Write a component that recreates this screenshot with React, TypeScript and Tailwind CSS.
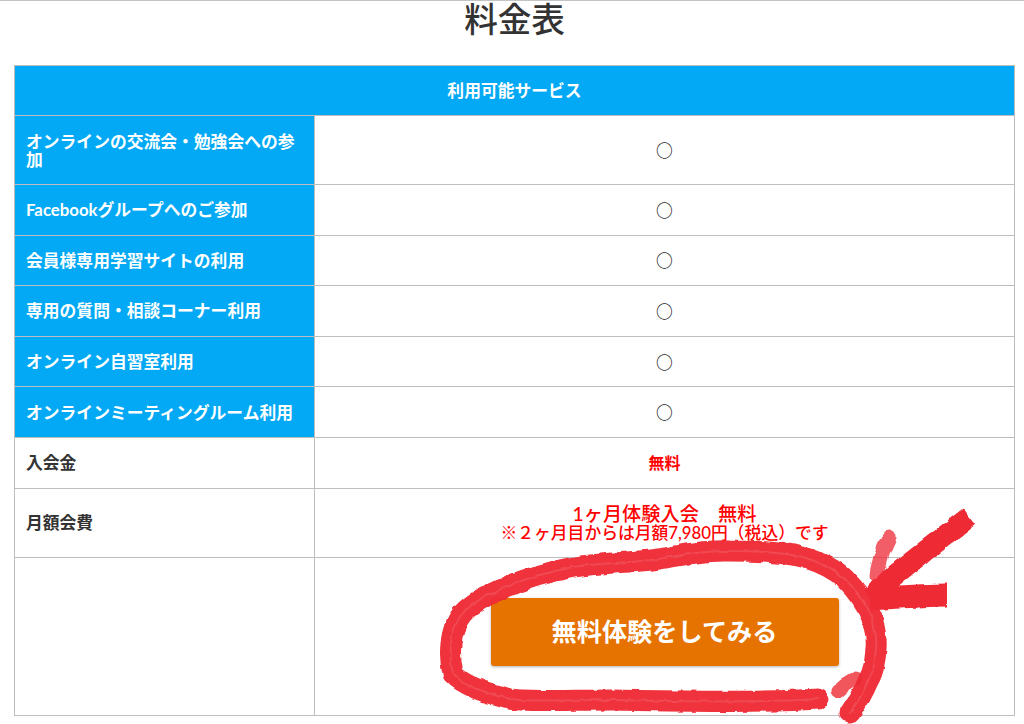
const services = [
  'Facebookグループへのご参加',
  '会員様専用学習サイトの利用',
  '専用の質問・相談コーナー利用',
  'オンライン自習室利用',
  'オンラインミーティングルーム利用',
];

const ellipsePath =
  'M818 698 C760 702 680 700 613 699 C570 699 535 701 509 698 C488 692 465 686 453 673 C450 660 450 652 451 643 C452 630 455 622 462 613 C472 602 484 596 497 590 C522 578 548 571 574 566 C605 561 632 562 659 558 C685 553 708 549 729 550 C760 550 785 551 806 557 C822 562 835 568 845 578 C857 590 866 603 872 617 C875 628 877 638 876 647 C875 660 874 670 868 680 C863 692 857 702 850 712';

function Ink() {
  return (
    <svg className="absolute left-0 top-0 pointer-events-none" width="1024" height="724" viewBox="0 0 1024 724" fill="none">
      <defs>
        <filter id="brush" filterUnits="userSpaceOnUse" x="0" y="0" width="1024" height="724">
          <feTurbulence type="fractalNoise" baseFrequency="0.1" numOctaves="2" seed="4" />
          <feDisplacementMap in="SourceGraphic" scale="4" xChannelSelector="R" yChannelSelector="G" />
        </filter>
      </defs>
      <g stroke="#ee2a35" strokeLinecap="round" strokeLinejoin="round" filter="url(#brush)">
        <path d={ellipsePath} strokeWidth="21" strokeOpacity="0.97" />
        <path d={ellipsePath} strokeWidth="2" stroke="#f25a62" strokeOpacity="0.6" />
        <path d="M969 516 C945 535 925 550 905 566 C892 576 882 585 872 596" strokeWidth="21" strokeLinecap="butt" />
        <path d="M870 598 C900 596 925 594 947 594" strokeWidth="23" strokeLinecap="butt" />
        <path d="M889 536 C883 548 879 560 877 574" strokeWidth="15" strokeOpacity="0.75" />
        <path d="M856 677 C849 680 843 685 838 690" strokeWidth="13" strokeOpacity="0.8" />
      </g>
    </svg>
  );
}

function Mark() {
  return (
    <td className="border border-[#bdbdbd] text-center font-['Noto_Sans_CJK_JP'] text-[16.8px] font-medium text-[#222222]">○</td>
  );
}

export default function App() {
  return (
    <div
      className="relative h-[724px] w-[1024px] overflow-hidden border-t border-[#c4c4c4] bg-white text-[#333333]"
      style={{ fontFamily: 'Lato, "Noto Sans CJK JP", sans-serif' }}
    >
      <h2 className="-mt-[1px] h-[65px] pl-[5px] text-center text-[33.6px] leading-[38px] font-medium">料金表</h2>
      <div className="px-[14px]">
        <table className="w-[1001px] table-fixed border-collapse text-[16.8px] leading-[18px] font-bold">
          <colgroup>
            <col className="w-[300px]" />
            <col />
          </colgroup>
          <thead>
            <tr className="h-[50px]">
              <th colSpan={2} className="border border-[#bdbdbd] bg-[#03a9f4] text-center font-bold text-white">
                利用可能サービス
              </th>
            </tr>
          </thead>
          <tbody>
            <tr className="h-[69px]">
              <th className="border border-[#bdbdbd] bg-[#03a9f4] px-[11px] pt-[1px] text-left font-bold text-white">
                オンラインの交流会・勉強会への参加
              </th>
              <Mark />
            </tr>
            {services.map((name) => (
              <tr key={name} className="h-[50.6px]">
                <th className="border border-[#bdbdbd] bg-[#03a9f4] px-[11px] pt-[1px] text-left font-bold text-white">{name}</th>
                <Mark />
              </tr>
            ))}
            <tr className="h-[51px]">
              <th className="border border-[#bdbdbd] px-[11px] text-left font-bold">入会金</th>
              <td className="border border-[#bdbdbd] text-center text-[16px] font-bold text-[#ff0000]">無料</td>
            </tr>
            <tr className="h-[69px]">
              <th className="border border-[#bdbdbd] px-[11px] text-left font-bold">月額会費</th>
              <td className="border border-[#bdbdbd] text-center font-medium text-[#ff0000]">
                <div className="text-[19.2px] leading-[20px]">1ヶ月体験入会　無料</div>
                <div className="text-[16.8px] leading-[17px]">※２ヶ月目からは月額7,980円（税込）です</div>
              </td>
            </tr>
            <tr className="h-[158px]">
              <td className="border border-[#bdbdbd]"></td>
              <td className="border border-[#bdbdbd] pb-[8px]">
                <div className="flex justify-center">
                  <a className="flex h-[68px] w-[348px] items-center justify-center rounded-[3px] bg-[#e67300] pb-[2px] text-[25.2px] font-bold text-white shadow-[0_1px_3px_rgba(0,0,0,0.3)]">
                    無料体験をしてみる
                  </a>
                </div>
              </td>
            </tr>
          </tbody>
        </table>
      </div>
      <Ink />
    </div>
  );
}
